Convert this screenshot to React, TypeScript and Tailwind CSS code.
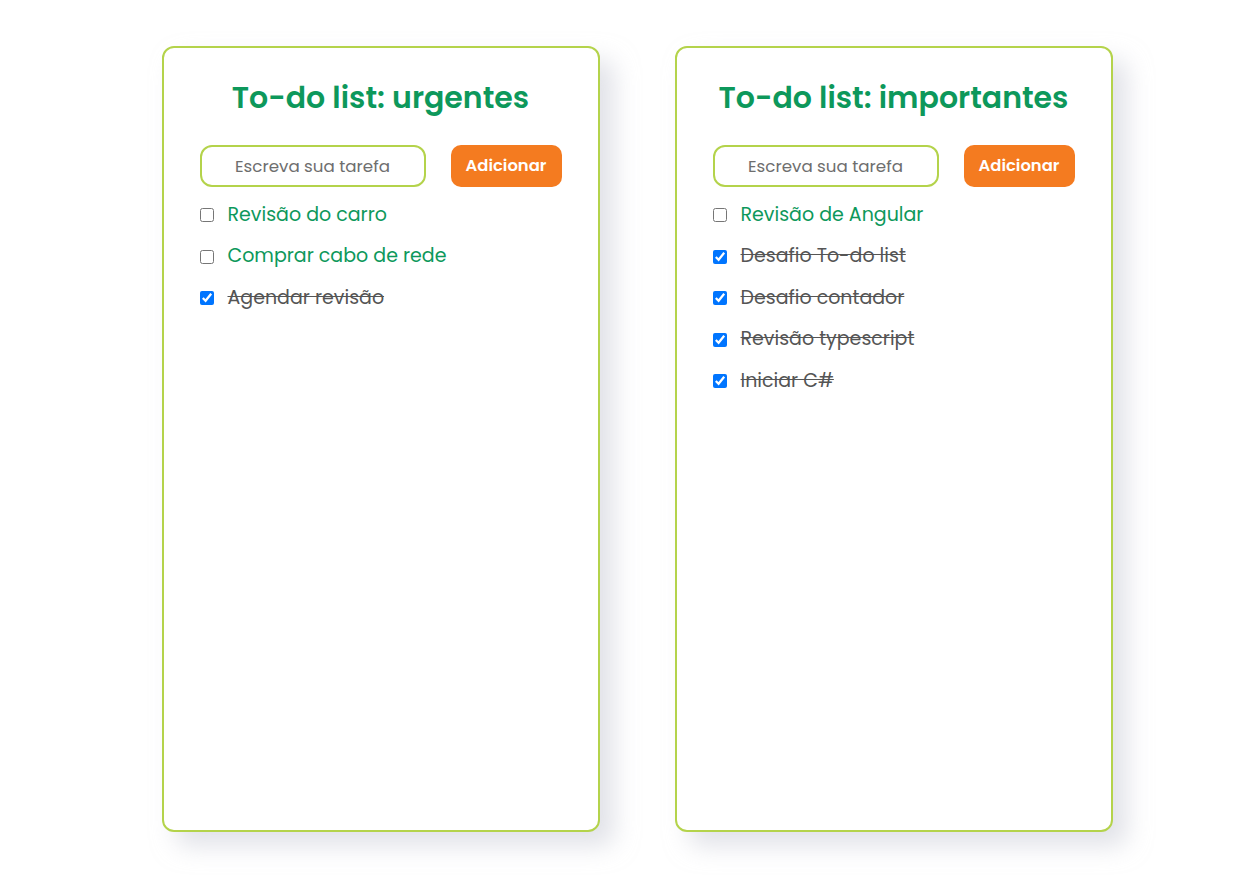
import { useState } from "react";

type Task = { id: number; text: string; done: boolean };

const urgentes: Task[] = [
	{ id: 1, text: "Revisão do carro", done: false },
	{ id: 2, text: "Comprar cabo de rede", done: false },
	{ id: 3, text: "Agendar revisão", done: true },
];

const importantes: Task[] = [
	{ id: 1, text: "Revisão de Angular", done: false },
	{ id: 2, text: "Desafio To-do list", done: true },
	{ id: 3, text: "Desafio contador", done: true },
	{ id: 4, text: "Revisão typescript", done: true },
	{ id: 5, text: "Iniciar C#", done: true },
];

function TodoCard({ title, initial }: { title: string; initial: Task[] }) {
	const [tasks, setTasks] = useState(initial);
	const [value, setValue] = useState("");

	const add = () => {
		if (!value.trim()) return;
		setTasks([...tasks, { id: Date.now(), text: value.trim(), done: false }]);
		setValue("");
	};

	const toggle = (id: number) =>
		setTasks(tasks.map((t) => (t.id === id ? { ...t, done: !t.done } : t)));

	return (
		<div className="flex h-[786px] w-[438px] flex-col rounded-[12px] border-2 border-[#b4d34b] bg-white px-[36px] pt-[26px] shadow-[14px_14px_24px_rgba(200,202,214,0.55)]">
			<h1 className="text-center text-[30px] font-semibold leading-[48px] text-[#0d985b]">
				{title}
			</h1>
			<div className="mt-[23px] flex items-center justify-between">
				<input
					type="text"
					placeholder="Escreva sua tarefa"
					value={value}
					onChange={(e) => setValue(e.target.value)}
					onKeyDown={(e) => e.key === "Enter" && add()}
					className="h-[42px] w-[226px] rounded-[12px] border-2 border-[#b4d34b] bg-white px-2 text-center text-[16.7px] text-[#555] outline-none placeholder:text-[#6e6e6e]"
				/>
				<button
					type="button"
					onClick={add}
					className="h-[42px] w-[111px] cursor-pointer rounded-[10px] bg-[#f47b20] text-[16.4px] font-semibold text-white"
				>
					Adicionar
				</button>
			</div>
			<ul className="mt-[15px] flex flex-col gap-[15.5px]">
				{tasks.map((t) => (
					<li key={t.id} className="flex h-[26px] items-center">
						<input
							type="checkbox"
							checked={t.done}
							onChange={() => toggle(t.id)}
							className="m-0 h-[14px] w-[14px]"
						/>
						<span
							className={
								t.done
									? "ml-[14px] text-[19px] text-[#555] line-through"
									: "ml-[14px] text-[19px] text-[#0d985b]"
							}
						>
							{t.text}
						</span>
					</li>
				))}
			</ul>
		</div>
	);
}

export default function App() {
	return (
		<div
			className="flex min-h-[891px] justify-center gap-[75px] bg-white pl-[21px] pt-[46px]"
			style={{ fontFamily: '"Poppins", "Inter", "Noto Sans", sans-serif' }}
		>
			<TodoCard title="To-do list: urgentes" initial={urgentes} />
			<TodoCard title="To-do list: importantes" initial={importantes} />
		</div>
	);
}
